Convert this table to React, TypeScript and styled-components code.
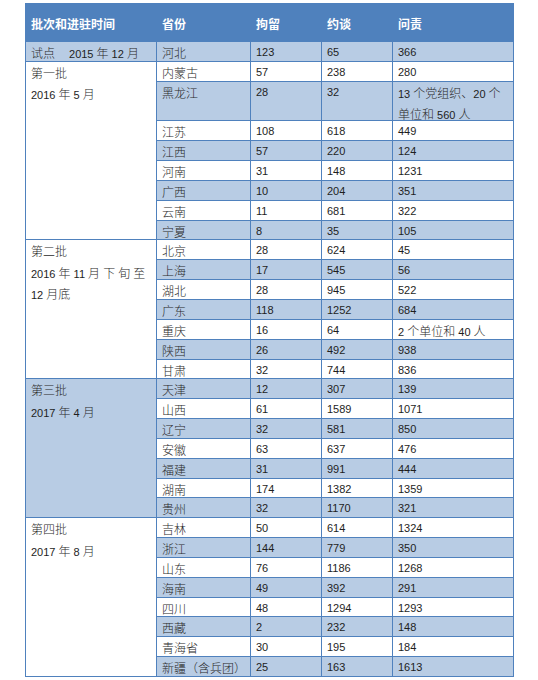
import React from "react";
import styled, { createGlobalStyle } from "styled-components";

const GlobalStyle = createGlobalStyle`
  html, body { margin: 0; padding: 0; background: #ffffff; }
  body { font-family: "Liberation Sans", "Noto Sans CJK SC", sans-serif; }
`;

const Page = styled.div`
  width: 538px;
  height: 680px;
  padding: 3px 0 0 25px;
  box-sizing: border-box;
`;

const Table = styled.div`
  display: grid;
  grid-template-columns: 130px 93px 70px 70px 120px;
  grid-template-rows: 37px repeat(32, 1fr);
  width: 489px;
  height: 674px;
  box-sizing: border-box;
  padding: 1px;
  gap: 1px;
  background: #4f81bd;
`;

const HeadCell = styled.div`
  background: #4f81bd;
  color: #ffffff;
  font-family: "Noto Sans CJK SC", sans-serif;
  font-weight: 700;
  font-size: 12px;
  display: flex;
  align-items: center;
  padding: 1px 5px 0;
`;

const Cell = styled.div<{ $shade: boolean; $span: number }>`
  grid-row: span ${(p) => p.$span};
  background: ${(p) => (p.$shade ? "#b8cce4" : "#ffffff")};
  color: #1e1e1e;
  font-family: "Liberation Sans", "Noto Sans CJK SC", sans-serif;
  font-size: 11px;
  line-height: 19.5px;
  padding: 1px 5px 0;
  white-space: nowrap;
  min-height: 0;
`;

const Han = styled.span`
  font-family: "Noto Sans CJK SC", sans-serif;
  font-weight: 300;
  font-size: 12px;
  color: #2a2a2a;
`;

const Gap = styled.span`
  display: inline-block;
  width: 14px;
`;

const HAN_RE = /([\u3000-\u9fff\uff00-\uffef]+)/;

function renderText(s: string) {
  return s.split(HAN_RE).map((part, i) =>
    HAN_RE.test(part) ? <Han key={i}>{part}</Han> : <React.Fragment key={i}>{part}</React.Fragment>
  );
}

type Row = { p: string; a: string; b: string; c: string[]; span?: number };
type Group = { batch: React.ReactNode; rows: Row[] };

const groups: Group[] = [
  {
    batch: (
      <>
        {renderText("试点")}
        <Gap />
        {renderText("2015 年 12 月")}
      </>
    ),
    rows: [{ p: "河北", a: "123", b: "65", c: ["366"] }],
  },
  {
    batch: (
      <>
        {renderText("第一批")}
        <br />
        {renderText("2016 年 5 月")}
      </>
    ),
    rows: [
      { p: "内蒙古", a: "57", b: "238", c: ["280"] },
      { p: "黑龙江", a: "28", b: "32", c: ["13 个党组织、20 个", "单位和 560 人"], span: 2 },
      { p: "江苏", a: "108", b: "618", c: ["449"] },
      { p: "江西", a: "57", b: "220", c: ["124"] },
      { p: "河南", a: "31", b: "148", c: ["1231"] },
      { p: "广西", a: "10", b: "204", c: ["351"] },
      { p: "云南", a: "11", b: "681", c: ["322"] },
      { p: "宁夏", a: "8", b: "35", c: ["105"] },
    ],
  },
  {
    batch: (
      <>
        {renderText("第二批")}
        <br />
        {renderText("2016 年 11 月 下 旬 至")}
        <br />
        {renderText("12 月底")}
      </>
    ),
    rows: [
      { p: "北京", a: "28", b: "624", c: ["45"] },
      { p: "上海", a: "17", b: "545", c: ["56"] },
      { p: "湖北", a: "28", b: "945", c: ["522"] },
      { p: "广东", a: "118", b: "1252", c: ["684"] },
      { p: "重庆", a: "16", b: "64", c: ["2 个单位和 40 人"] },
      { p: "陕西", a: "26", b: "492", c: ["938"] },
      { p: "甘肃", a: "32", b: "744", c: ["836"] },
    ],
  },
  {
    batch: (
      <>
        {renderText("第三批")}
        <br />
        {renderText("2017 年 4 月")}
      </>
    ),
    rows: [
      { p: "天津", a: "12", b: "307", c: ["139"] },
      { p: "山西", a: "61", b: "1589", c: ["1071"] },
      { p: "辽宁", a: "32", b: "581", c: ["850"] },
      { p: "安徽", a: "63", b: "637", c: ["476"] },
      { p: "福建", a: "31", b: "991", c: ["444"] },
      { p: "湖南", a: "174", b: "1382", c: ["1359"] },
      { p: "贵州", a: "32", b: "1170", c: ["321"] },
    ],
  },
  {
    batch: (
      <>
        {renderText("第四批")}
        <br />
        {renderText("2017 年 8 月")}
      </>
    ),
    rows: [
      { p: "吉林", a: "50", b: "614", c: ["1324"] },
      { p: "浙江", a: "144", b: "779", c: ["350"] },
      { p: "山东", a: "76", b: "1186", c: ["1268"] },
      { p: "海南", a: "49", b: "392", c: ["291"] },
      { p: "四川", a: "48", b: "1294", c: ["1293"] },
      { p: "西藏", a: "2", b: "232", c: ["148"] },
      { p: "青海省", a: "30", b: "195", c: ["184"] },
      { p: "新疆（含兵团）", a: "25", b: "163", c: ["1613"] },
    ],
  },
];

const headers = ["批次和进驻时间", "省份", "拘留", "约谈", "问责"];

export default function App() {
  let index = 0;
  const cells: React.ReactNode[] = [];
  groups.forEach((g, gi) => {
    const groupSpan = g.rows.reduce((s, r) => s + (r.span ?? 1), 0);
    const firstShade = index % 2 === 0;
    g.rows.forEach((r, ri) => {
      const shade = index % 2 === 0;
      const span = r.span ?? 1;
      if (ri === 0) {
        cells.push(
          <Cell key={`b${gi}`} $shade={firstShade} $span={groupSpan}>
            {g.batch}
          </Cell>
        );
      }
      cells.push(
        <Cell key={`p${index}`} $shade={shade} $span={span}>
          {renderText(r.p)}
        </Cell>,
        <Cell key={`a${index}`} $shade={shade} $span={span}>
          {r.a}
        </Cell>,
        <Cell key={`n${index}`} $shade={shade} $span={span}>
          {r.b}
        </Cell>,
        <Cell key={`c${index}`} $shade={shade} $span={span}>
          {r.c.map((line, li) => (
            <React.Fragment key={li}>
              {li > 0 && <br />}
              {renderText(line)}
            </React.Fragment>
          ))}
        </Cell>
      );
      index += 1;
    });
  });

  return (
    <>
      <GlobalStyle />
      <Page>
        <Table>
          {headers.map((h) => (
            <HeadCell key={h}>{h}</HeadCell>
          ))}
          {cells}
        </Table>
      </Page>
    </>
  );
}
